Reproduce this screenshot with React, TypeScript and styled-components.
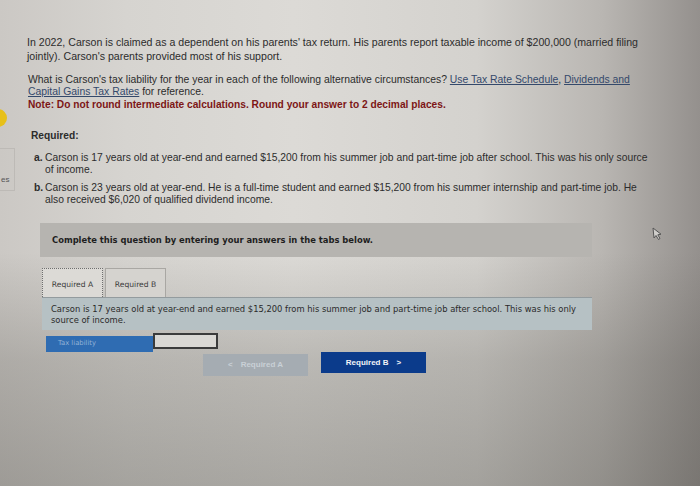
import React from "react";
import styled, { createGlobalStyle } from "styled-components";

const Global = createGlobalStyle`
  html, body { margin: 0; padding: 0; }
  body { background: #b8b5b1; }
`;

const Screen = styled.div`
  position: relative;
  width: 700px;
  height: 486px;
  overflow: hidden;
  display: flex;
  background:
    linear-gradient(180deg, rgba(0,0,0,0) 0%, rgba(0,0,0,0) 52%, rgba(70,68,62,0.22) 74%, rgba(70,68,62,0.34) 100%),
    linear-gradient(90deg, #cbc8c4 0%, #d6d4d0 18%, #dcdad6 42%, #d4d2ce 68%, #b9b6b2 86%, #94908d 100%);
  font-family: "Liberation Sans", Arial, sans-serif;
  color: #2c2c2c;
`;

const Sidebar = styled.div`
  width: 15px;
  flex: none;
  display: flex;
  flex-direction: column;
  padding-top: 109px;
`;

const Dot = styled.div`
  width: 18px;
  height: 18px;
  margin-left: -11px;
  border-radius: 50%;
  background: #e7c019;
`;

const SideBox = styled.div`
  margin-top: 21px;
  height: 43px;
  border: 1px solid #bdbab6;
  border-left: none;
  box-sizing: border-box;
  font-size: 8px;
  color: #555;
  padding: 26px 0 0 1px;
`;

const Main = styled.div`
  flex: 1;
  padding: 36px 0 0 12px;
  display: flex;
  flex-direction: column;
`;

const Para = styled.p<{ $indent?: number; $gap?: number; $size: number; $lh: number }>`
  margin: ${(p) => p.$gap ?? 0}px 0 0 ${(p) => p.$indent ?? 0}px;
  width: 660px;
  font-size: ${(p) => p.$size}px;
  line-height: ${(p) => p.$lh}px;
  white-space: nowrap;
`;

const Link = styled.span`
  color: #34496b;
  text-decoration: underline;
`;

const Note = styled.span`
  display: block;
  font-size: 10.2px;
  color: #7d1616;
  font-weight: bold;
`;

const Heading = styled.div`
  margin: 19px 0 0 4px;
  font-size: 10.2px;
  font-weight: bold;
`;

const Item = styled.div<{ $gap: number }>`
  margin: ${(p) => p.$gap}px 0 0 7px;
  display: flex;
  font-size: 10.3px;
  line-height: 12.5px;
  white-space: nowrap;
`;

const Letter = styled.span`
  width: 11px;
  flex: none;
  font-weight: bold;
`;

const Question = styled.div`
  margin: 16px 0 0 13px;
  width: 552px;
  display: flex;
  flex-direction: column;
  font-family: "DejaVu Sans", Verdana, sans-serif;
`;

const Banner = styled.div`
  height: 34px;
  background: #b6b4b0;
  display: flex;
  align-items: center;
  padding-left: 12px;
  font-size: 8.4px;
  font-weight: bold;
  color: #1e1e1e;
`;

const Tabs = styled.div`
  margin: 11px 0 0 2px;
  display: flex;
  gap: 2px;
`;

const Tab = styled.div<{ $active?: boolean }>`
  width: 61px;
  height: 29px;
  box-sizing: border-box;
  display: flex;
  align-items: flex-end;
  justify-content: center;
  padding-bottom: 8px;
  font-size: 7.6px;
  color: #3a3a3a;
  background: ${(p) => (p.$active ? "#dcdad6" : "#d5d3cf")};
  border: ${(p) => (p.$active ? "1px dotted #6e6e6e" : "1px solid #a9a7a3")};
  border-bottom: none;
`;

const Info = styled.div`
  margin-left: 2px;
  height: 33px;
  box-sizing: border-box;
  background: #b6c1c4;
  border-top: 1px solid #939b9e;
  padding: 6px 9px 0;
  font-size: 8.4px;
  line-height: 11px;
  color: #2a2a2a;
`;

const AnswerRow = styled.div`
  margin: 3px 0 0 6px;
  display: flex;
  align-items: flex-start;
`;

const Label = styled.div`
  width: 107px;
  height: 16px;
  margin-top: 3px;
  background: #2f6cb2;
  color: #93b2d6;
  font-size: 6.8px;
  padding: 3px 0 0 12px;
  box-sizing: border-box;
`;

const Input = styled.div`
  width: 65px;
  height: 16px;
  box-sizing: border-box;
  border: 2px solid #3b3b3b;
  background: #dad8d4;
`;

const Buttons = styled.div`
  margin: 0 0 0 163px;
  display: flex;
  align-items: flex-start;
  gap: 13px;
  font-family: "Liberation Sans", Arial, sans-serif;
`;

const NavButton = styled.div<{ $primary?: boolean }>`
  width: 105px;
  height: ${(p) => (p.$primary ? 21 : 22)}px;
  margin-top: ${(p) => (p.$primary ? 0 : 2)}px;
  display: flex;
  align-items: center;
  justify-content: center;
  gap: 8px;
  font-size: 8px;
  font-weight: bold;
  background: ${(p) => (p.$primary ? "#0b3b8b" : "#a5acb2")};
  color: ${(p) => (p.$primary ? "#f2f4f8" : "#c9d0d6")};
`;

const Cursor = styled.svg`
  position: absolute;
  left: 651px;
  top: 227px;
`;

export default function App() {
  return (
    <>
      <Global />
      <Screen>
        <Sidebar>
          <Dot />
          <SideBox>es</SideBox>
        </Sidebar>
        <Main>
          <Para $size={10.6} $lh={13.5}>
            In 2022, Carson is claimed as a dependent on his parents' tax return. His parents report taxable income of
            $200,000 (married filing
            <br />
            jointly). Carson's parents provided most of his support.
          </Para>
          <Para $gap={11} $indent={1} $size={10.4} $lh={12.3}>
            What is Carson's tax liability for the year in each of the following alternative circumstances?{" "}
            <Link>Use Tax Rate Schedule</Link>, <Link>Dividends and</Link>
            <br />
            <Link>Capital Gains Tax Rates</Link> for reference.
            <Note>Note: Do not round intermediate calculations. Round your answer to 2 decimal places.</Note>
          </Para>
          <Heading>Required:</Heading>
          <Item $gap={11}>
            <Letter>a.</Letter>
            <span>
              Carson is 17 years old at year-end and earned $15,200 from his summer job and part-time job after school.
              This was his only source
              <br />
              of income.
            </span>
          </Item>
          <Item $gap={5}>
            <Letter>b.</Letter>
            <span>
              Carson is 23 years old at year-end. He is a full-time student and earned $15,200 from his summer
              internship and part-time job. He
              <br />
              also received $6,020 of qualified dividend income.
            </span>
          </Item>
          <Question>
            <Banner>Complete this question by entering your answers in the tabs below.</Banner>
            <Tabs>
              <Tab $active>Required A</Tab>
              <Tab>Required B</Tab>
            </Tabs>
            <Info>
              Carson is 17 years old at year-end and earned $15,200 from his summer job and part-time job after school.
              This was his only source of income.
            </Info>
            <AnswerRow>
              <Label>Tax liability</Label>
              <Input />
            </AnswerRow>
            <Buttons>
              <NavButton>
                <span>&lt;</span>
                <span>Required A</span>
              </NavButton>
              <NavButton $primary>
                <span>Required B</span>
                <span>&gt;</span>
              </NavButton>
            </Buttons>
          </Question>
        </Main>
        <Cursor width="12" height="14" viewBox="0 0 12 14">
          <path d="M2 1 L3 11 L5 8.5 L7.5 12.5 L9 11.5 L6.8 7.8 L10 7.2 Z" fill="#d0cecb" stroke="#555" strokeWidth="1" />
        </Cursor>
      </Screen>
    </>
  );
}
